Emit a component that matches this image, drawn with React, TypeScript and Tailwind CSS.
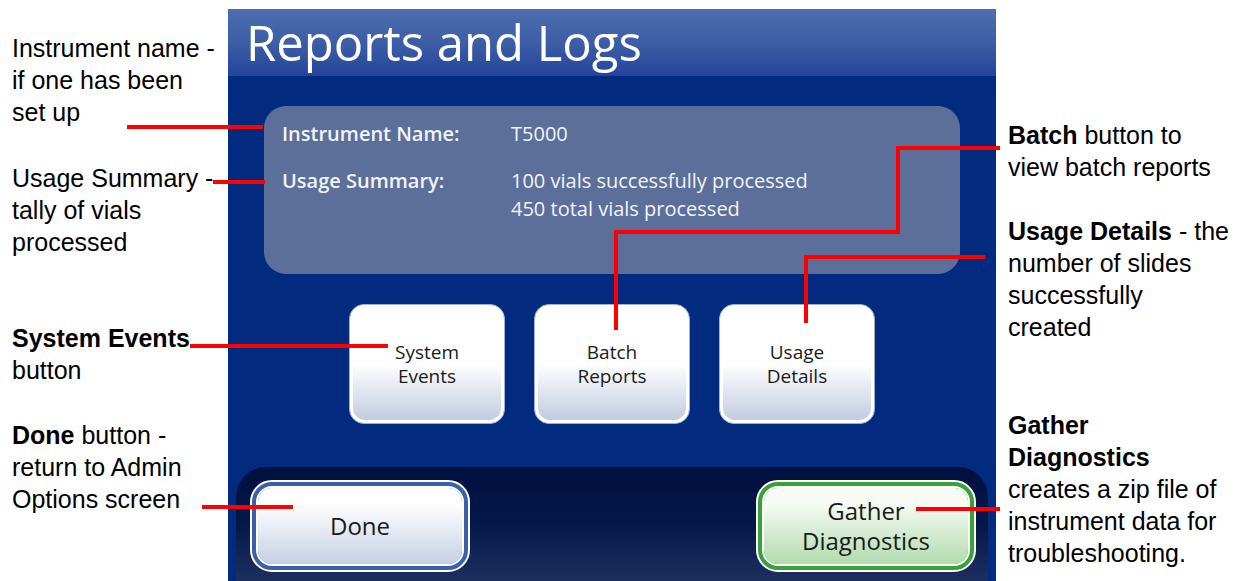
import React from 'react';

const RedH = ({ x1, x2, y }: { x1: number; x2: number; y: number }) => (
  <div className="absolute h-[4px] bg-[#ff0000]" style={{ left: x1, top: y - 2, width: x2 - x1 }} />
);

const RedV = ({ x, y1, y2 }: { x: number; y1: number; y2: number }) => (
  <div className="absolute w-[4px] bg-[#ff0000]" style={{ left: x - 2, top: y1 - 2, height: y2 - y1 + 2 }} />
);

const Callout = ({ children, className = '' }: { children: React.ReactNode; className?: string }) => (
  <p className={`text-[25px] leading-[32px] text-black ${className}`}>{children}</p>
);

const TileButton = ({ top, bottom }: { top: string; bottom: string }) => (
  <div className="h-[120px] w-[156px] rounded-[15px] border border-[#9db0d4] bg-white p-[3px]">
    <div className="flex h-full w-full flex-col items-center justify-center rounded-[12px] bg-gradient-to-b from-white from-50% to-[#c2cbe0] text-[19px] leading-[24px] text-[#1a1a1a]">
      <span>{top}</span>
      <span>{bottom}</span>
    </div>
  </div>
);

const BigButton = ({ ring, from, to, children }: { ring: string; from: string; to: string; children: React.ReactNode }) => (
  <div className="h-[92px] w-[220px] rounded-[22px] border-2 border-white" style={{ background: ring, padding: 4 }}>
    <div className="h-full w-full rounded-[16px] border-2 border-white">
      <div
        className="flex h-full w-full flex-col items-center justify-center rounded-[14px] text-[24px] leading-[30px] text-[#1a1a1a]"
        style={{ background: `linear-gradient(to bottom, ${from} 20%, ${to})` }}
      >
        {children}
      </div>
    </div>
  </div>
);

const App = () => {
  return (
    <div className="relative flex h-[581px] w-[1239px] overflow-hidden bg-white font-['Liberation_Sans',Arial,sans-serif]">
      {/* left notes */}
      <div className="flex w-[228px] flex-col pl-3">
        <Callout className="mt-[32px]">
          Instrument name -<br />if one has been<br />set up
        </Callout>
        <Callout className="mt-[34px]">
          Usage Summary -<br />tally of vials<br />processed
        </Callout>
        <Callout className="mt-[64px]">
          <b>System Events</b>
          <br />button
        </Callout>
        <Callout className="mt-[33px]">
          <b>Done</b> button -<br />return to Admin<br />Options screen
        </Callout>
      </div>

      {/* instrument screen */}
      <div className="flex w-[768px] flex-col pt-[9px] font-['Open_Sans',sans-serif]">
        <div className="h-[67px] bg-gradient-to-b from-[#4d6db0] via-[#3d5ea6] to-[#23449a] pl-[18px] pt-[4px]">
          <h1 className="text-[49px] leading-[58px] text-white">Reports and Logs</h1>
        </div>
        <div className="flex flex-1 flex-col bg-[#022a7f]">
          <div className="mx-[36px] mt-[30px] h-[168px] rounded-[22px] bg-[#5b6f9a] px-[18px] pt-[14px] text-[20px] leading-[28px] text-[#f2f4f8]">
            <div className="flex">
              <span className="w-[229px] font-semibold">Instrument Name:</span>
              <span>T5000</span>
            </div>
            <div className="mt-[19px] flex">
              <span className="w-[229px] font-semibold">Usage Summary:</span>
              <div className="flex flex-col">
                <span>100 vials successfully processed</span>
                <span>450 total vials processed</span>
              </div>
            </div>
          </div>

          <div className="mt-[30px] flex justify-center gap-[29px]">
            <TileButton top="System" bottom="Events" />
            <TileButton top="Batch" bottom="Reports" />
            <TileButton top="Usage" bottom="Details" />
          </div>

          <div className="mx-[8px] mt-auto flex h-[114px] justify-between rounded-t-[30px] bg-gradient-to-b from-[#00103f] via-[#06184a] to-[#1d2f5f] pl-[14px] pr-[12px] pt-[13px]">
            <BigButton ring="#3a60a8" from="#ffffff" to="#c5d0e4">
              <span>Done</span>
            </BigButton>
            <BigButton ring="#39a136" from="#f6fbf5" to="#b2dbad">
              <span>Gather</span>
              <span>Diagnostics</span>
            </BigButton>
          </div>
        </div>
      </div>

      {/* right notes */}
      <div className="flex flex-1 flex-col pl-3">
        <Callout className="mt-[119px]">
          <b>Batch</b> button to<br />view batch reports
        </Callout>
        <Callout className="mt-[32px]">
          <b>Usage Details</b> - the<br />number of slides<br />successfully<br />created
        </Callout>
        <Callout className="mt-[66px]">
          <b>Gather</b>
          <br />
          <b>Diagnostics</b>
          <br />creates a zip file of<br />instrument data for<br />troubleshooting.
        </Callout>
      </div>

      {/* callout lines */}
      <RedH x1={127} x2={263} y={127} />
      <RedH x1={213} x2={265} y={182} />
      <RedH x1={897} x2={1000} y={148} />
      <RedV x={898} y1={148} y2={233} />
      <RedH x1={615} x2={900} y={232} />
      <RedV x={616} y1={232} y2={330} />
      <RedH x1={805} x2={985} y={257} />
      <RedV x={806} y1={257} y2={323} />
      <RedH x1={190} x2={388} y={346} />
      <RedH x1={202} x2={293} y={507} />
      <RedH x1={916} x2={1000} y={509} />
    </div>
  );
};

export default App;
